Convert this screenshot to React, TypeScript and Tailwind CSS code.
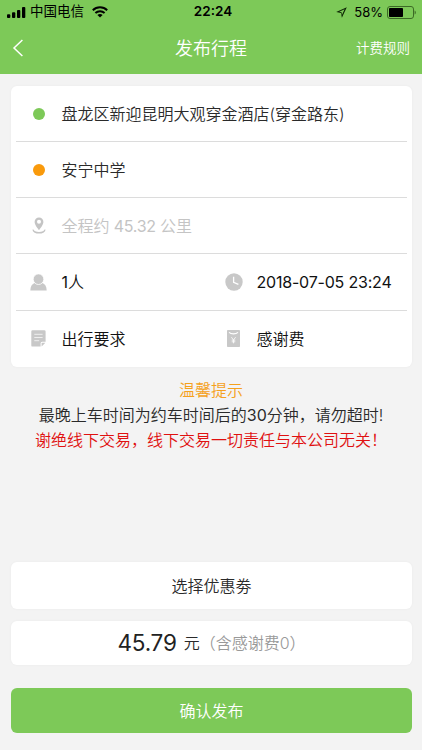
import type { ReactNode } from "react";

function StatusBar() {
  return (
    <div className="grid grid-cols-3 items-center h-6 text-black font-normal">
      <div className="flex items-center pl-[7px]">
        <svg width="19" height="11" viewBox="0 0 19 11" fill="currentColor">
          <rect x="0" y="7.3" width="3.3" height="3.7" rx="0.9" />
          <rect x="5" y="5.3" width="3.3" height="5.7" rx="0.9" />
          <rect x="10" y="3" width="3.3" height="8" rx="0.9" />
          <rect x="15" y="0" width="3.3" height="11" rx="0.9" />
        </svg>
        <span className="ml-1 text-[13.5px] leading-none whitespace-nowrap">中国电信</span>
        <svg className="ml-2" width="16" height="12" viewBox="0 0 16 12" fill="none" stroke="currentColor" strokeWidth="2">
          <path d="M0.8 4.2C4.8 0.3 11.2 0.3 15.2 4.2" />
          <path d="M3.4 7C6 4.5 10 4.5 12.6 7" />
          <path d="M8 11.5L5.4 8.9C6.9 7.6 9.1 7.6 10.6 8.9Z" fill="currentColor" stroke="none" />
        </svg>
      </div>
      <div className="pl-1 text-center text-[13.5px] leading-none font-semibold">22:24</div>
      <div className="flex items-center justify-end pr-1.5">
        <svg width="11" height="11" viewBox="0 0 11 11">
          <path fillRule="evenodd" d="M10.8 0.2L0.2 5.1L5 5.9L5.9 10.8ZM8.6 2.2L5.9 7.9L5.6 5.3L3.2 4.8Z" fill="#0c2403" />
        </svg>
        <span className="ml-[7px] text-[13px] leading-none">58%</span>
        <svg className="ml-1" width="29" height="13" viewBox="0 0 29 13">
          <rect x="0.5" y="0.5" width="26" height="12" rx="2.5" fill="none" stroke="#3c6a25" />
          <rect x="2" y="2" width="14" height="9" rx="0.8" fill="currentColor" />
          <path d="M27.6 4.5C29.2 5.3 29.2 7.7 27.6 8.5Z" fill="#3c6a25" />
        </svg>
      </div>
    </div>
  );
}

function NavBar() {
  return (
    <div className="grid grid-cols-3 items-center h-[50px] text-white">
      <svg className="ml-3 -mt-0.5" width="12" height="18" viewBox="0 0 12 18" fill="none" stroke="currentColor" strokeWidth="1.5">
        <path d="M10.4 1L2 9L10.4 17" />
      </svg>
      <h1 className="text-center text-[18px] leading-none">发布行程</h1>
      <span className="pr-3 text-right text-[13.5px] leading-none">计费规则</span>
    </div>
  );
}

function PinIcon() {
  return (
    <svg width="14" height="17" viewBox="0 0 14 17">
      <path fillRule="evenodd" d="M7 0.4A4.4 4.4 0 0 0 2.6 4.9C2.6 8 7 13 7 13S11.4 8 11.4 4.9A4.4 4.4 0 0 0 7 0.4ZM7 2.7A2 2 0 1 1 7 6.7A2 2 0 0 1 7 2.7Z" fill="#c4c4c4" />
      <path d="M1.2 12.6C1 16.8 13 16.8 12.8 12.6" fill="none" stroke="#c4c4c4" strokeWidth="1.5" />
    </svg>
  );
}

function PersonIcon() {
  return (
    <svg width="17" height="17" viewBox="0 0 17 17">
      <path d="M0.3 16.6C0.4 12.3 2 10 4.7 9H12.3C15 10 16.6 12.3 16.7 16.6Z" fill="#c8c8c8" />
      <circle cx="8.5" cy="5.2" r="5.3" fill="#c8c8c8" stroke="#fff" strokeWidth="0.8" />
    </svg>
  );
}

function ClockIcon() {
  return (
    <svg width="18" height="18" viewBox="0 0 18 18">
      <circle cx="9" cy="9" r="8.7" fill="#c8c8c8" />
      <path d="M8.6 3.7V9.4L13.4 11.4" fill="none" stroke="#fff" strokeWidth="1.3" />
    </svg>
  );
}

function NoteIcon() {
  return (
    <svg width="15" height="17" viewBox="0 0 15 17">
      <path d="M1.5 0.3H13.3Q14.6 0.3 14.6 1.6V11.7H11.2Q9.6 11.7 9.6 13.2V16.6H1.5Q0.3 16.6 0.3 15.4V1.5Q0.3 0.3 1.5 0.3Z" fill="#c8c8c8" />
      <path d="M10.6 16.4V13.4Q10.6 12.7 11.3 12.7H14.4Z" fill="#c8c8c8" />
      <path d="M3.3 4.3H11.6M3.3 7.5H11.6M3.3 10.7H8.2" stroke="#fff" strokeWidth="0.7" />
    </svg>
  );
}

function FeeIcon() {
  return (
    <svg width="13" height="17" viewBox="0 0 13 17">
      <rect width="13" height="17" rx="0.8" fill="#c8c8c8" />
      <path d="M2 2.3C4.2 4.4 8.8 4.4 11 2.3" fill="none" stroke="#fff" strokeWidth="1.1" />
      <path d="M4.4 7.2L6.5 10L8.6 7.2M6.5 10V13.3M4.7 10.2H8.3M4.7 11.8H8.3" fill="none" stroke="#fff" strokeWidth="0.8" />
    </svg>
  );
}

interface CellProps {
  icon: ReactNode;
  children: ReactNode;
  className?: string;
}

function Cell({ icon, children, className = "" }: CellProps) {
  return (
    <div className={`flex items-center whitespace-nowrap ${className}`}>
      <span className="flex w-[45.5px] shrink-0 justify-center">{icon}</span>
      <span>{children}</span>
    </div>
  );
}

function Dot({ className }: { className: string }) {
  return <span className={`block size-3 rounded-full ${className}`} />;
}

export default function App() {
  return (
    <div className="flex h-[750px] w-[422px] flex-col bg-[#f3f3f3] text-[16px] leading-6 font-[350] text-[#2a2a2a] font-['Inter','Noto_Sans_CJK_SC',sans-serif]">
      <header className="bg-[#7dc958]">
        <StatusBar />
        <NavBar />
      </header>

      <section className="mr-[10px] ml-[11px] mt-3 h-[281px] rounded-md bg-white px-[5px] shadow-[0_0_3px_rgba(0,0,0,0.04)]">
        <div className="flex h-14 border-b border-[#dcdcdc]">
          <Cell icon={<Dot className="bg-[#7dc958]" />}>盘龙区新迎昆明大观穿金酒店(穿金路东)</Cell>
        </div>
        <div className="flex h-14 border-b border-[#dcdcdc]">
          <Cell icon={<Dot className="bg-[#f99a0c]" />}>安宁中学</Cell>
        </div>
        <div className="flex h-14 border-b border-[#dcdcdc] text-[#c4c4c4]">
          <Cell icon={<PinIcon />}>
            全程约<span className="font-normal tracking-[-0.3px]"> 45.32 </span>公里
          </Cell>
        </div>
        <div className="flex h-[57px] border-b border-[#dcdcdc] text-[#111]">
          <Cell icon={<PersonIcon />} className="w-[195px]">
            <span className="font-normal">1</span>人
          </Cell>
          <Cell icon={<ClockIcon />} className="font-normal tracking-[-0.2px]">2018-07-05 23:24</Cell>
        </div>
        <div className="flex h-[55px] text-[#111]">
          <Cell icon={<NoteIcon />} className="w-[195px]">出行要求</Cell>
          <Cell icon={<FeeIcon />}>感谢费</Cell>
        </div>
      </section>

      <div className="mt-[11px] text-center leading-[25px] whitespace-nowrap">
        <p className="text-[#f5a11c]">温馨提示</p>
        <p>最晚上车时间为约车时间后的<span className="font-normal">30</span>分钟，请勿超时!</p>
        <p className="text-[#e01010]">谢绝线下交易，线下交易一切责任与本公司无关！</p>
      </div>

      <div className="mr-[10px] ml-[11px] mt-auto mb-[17px] flex flex-col">
        <button className="h-[47px] rounded-md bg-white shadow-[0_0_3px_rgba(0,0,0,0.04)]">选择优惠劵</button>
        <div className="mt-3 flex h-[44px] items-center justify-center rounded-md bg-white shadow-[0_0_3px_rgba(0,0,0,0.04)]">
          <span className="text-[22.5px] font-normal tracking-[-0.2px] text-[#222]">45.79</span>
          <span className="ml-[7px]">元</span>
          <span className="text-[#999]">（含感谢费0）</span>
        </div>
        <button className="mt-[23px] h-[45px] rounded-md bg-[#7dc958] text-white">确认发布</button>
      </div>
    </div>
  );
}
